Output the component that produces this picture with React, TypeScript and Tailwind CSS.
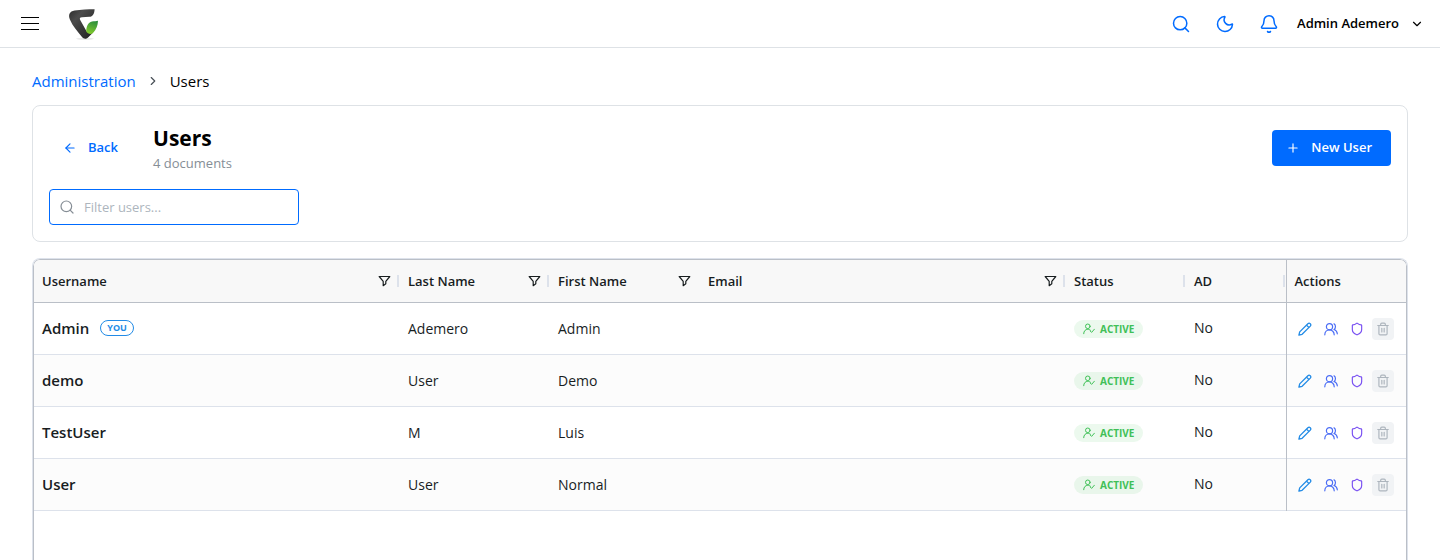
import { useState, type ReactNode } from 'react';
import { ArrowLeft, Bell, ChevronDown, ChevronRight, Moon, Plus, Search, Shield, Trash2 } from 'lucide-react';

interface User {
  username: string;
  lastName: string;
  firstName: string;
  email: string;
  ad: boolean;
  you?: boolean;
}

const users: User[] = [
  { username: 'Admin', lastName: 'Ademero', firstName: 'Admin', email: '', ad: false, you: true },
  { username: 'demo', lastName: 'User', firstName: 'Demo', email: '', ad: false },
  { username: 'TestUser', lastName: 'M', firstName: 'Luis', email: '', ad: false },
  { username: 'User', lastName: 'User', firstName: 'Normal', email: '', ad: false },
];

const columns = [
  { label: 'Username', filter: true, resize: true, width: '' },
  { label: 'Last Name', filter: true, resize: true, width: 'w-[150px]' },
  { label: 'First Name', filter: true, resize: false, width: 'w-[150px]' },
  { label: 'Email', filter: true, resize: true, width: '' },
  { label: 'Status', filter: false, resize: true, width: 'w-[120px]' },
  { label: 'AD', filter: false, resize: true, width: 'w-[100px]' },
];

function Logo() {
  return (
    <svg width="32" height="32" viewBox="0 0 32 32" aria-hidden="true">
      <defs>
        <linearGradient id="dark" x1="0" y1="0" x2="1" y2="1">
          <stop offset="0" stopColor="#2c2c2c" />
          <stop offset="0.3" stopColor="#4c4c4c" />
          <stop offset="1" stopColor="#1c1c1c" />
        </linearGradient>
        <linearGradient id="green" x1="0.6" y1="0" x2="0.3" y2="1">
          <stop offset="0" stopColor="#2c8f3c" />
          <stop offset="1" stopColor="#84cc2c" />
        </linearGradient>
      </defs>
      <ellipse cx="18" cy="30.8" rx="9" ry="0.9" fill="#e4e4e4" />
      <path
        d="M27.6 1.2C27.4 5.6 26 8.6 22.2 8.8L15 9.2C12.800 9.4 12.400 10.400 13.200 12L19.400 23L26 24.600L21.600 28.900C19.600 31.200 16.800 31.200 15 29.100C10.500 23.600 5.500 18 2.900 11.600C1 6.600 2.600 3.400 7.600 2.500C14 1.400 21 1.300 27.600 1.200Z"
        fill="url(#dark)"
      />
      <path
        d="M31 12.700C30.800 17.600 29.400 21 26 25C23.500 26.800 20.800 25.800 19.200 23.400C19.200 18.600 21 14.600 25 13.500C27.400 12.900 29.300 13.400 31 12.700Z"
        fill="url(#green)"
      />
    </svg>
  );
}

function FilterIcon() {
  return (
    <svg width="13" height="12" viewBox="0 0 13 12" fill="none" stroke="currentColor" strokeWidth="1.2">
      <path d="M1.200 1.500H11.800L7.800 6.300V8.800L5.200 10.700V6.300Z" strokeLinejoin="round" />
    </svg>
  );
}

function PencilIcon() {
  return (
    <svg width="14" height="14" viewBox="0 0 14 14" fill="none" stroke="currentColor" strokeWidth="1.3">
      <path d="M.9 13.100L1.700 9.900L9.900 1.700A1.700 1.700 0 0 1 12.300 4.100L4.100 12.300Z" strokeLinejoin="round" />
      <path d="M8.500 3.100L10.900 5.500" />
    </svg>
  );
}

function GroupIcon() {
  return (
    <svg
      width="14"
      height="14"
      viewBox="0 0 14 14"
      fill="none"
      stroke="currentColor"
      strokeWidth="1.2"
      strokeLinecap="round"
    >
      <circle cx="5.500" cy="4.700" r="3.100" />
      <path d="M.8 12.800C.8 9.900 2.900 7.900 5.500 7.900S10.200 9.900 10.200 12.800" />
      <path d="M10 1.800C11.900 3 11.900 6.100 10.200 7.500C12 8.300 13.200 9.800 13.300 11.800" />
    </svg>
  );
}

function UserCheckIcon() {
  return (
    <svg
      width="12"
      height="12"
      viewBox="0 0 12 12"
      fill="none"
      stroke="currentColor"
      strokeLinecap="round"
      strokeLinejoin="round"
    >
      <circle cx="4.800" cy="3.300" r="2.300" />
      <path d="M.7 10.700C.7 8 2.500 6.300 4.800 6.300C6 6.300 7 6.700 7.700 7.500" />
      <path d="M7.300 8.100L8.600 9.400L11.400 6.200" />
    </svg>
  );
}

interface IconButtonProps {
  label: string;
  className: string;
  disabled?: boolean;
  children: ReactNode;
}

function IconButton({ label, className, disabled, children }: IconButtonProps) {
  return (
    <button
      type="button"
      aria-label={label}
      disabled={disabled}
      className={`flex size-[22px] items-center justify-center rounded ${className}`}
    >
      {children}
    </button>
  );
}

function Header() {
  return (
    <header className="flex h-12 items-center justify-between border-b border-[#dee2e6] pr-4 pl-[21px]">
      <div className="flex items-center gap-7">
        <button type="button" aria-label="Toggle navigation" className="flex w-[18px] flex-col gap-[5px]">
          <span className="h-px w-full bg-black" />
          <span className="h-px w-full bg-black" />
          <span className="h-px w-full bg-black" />
        </button>
        <Logo />
      </div>
      <div className="flex items-center gap-[14px]">
        <div className="flex items-center gap-4 text-[#006bff]">
          <button type="button" aria-label="Search" className="flex size-7 items-center justify-center">
            <Search size={20} strokeWidth={1.8} />
          </button>
          <button type="button" aria-label="Dark mode" className="flex size-7 items-center justify-center">
            <Moon size={20} strokeWidth={1.8} />
          </button>
          <button type="button" aria-label="Notifications" className="flex size-7 items-center justify-center">
            <Bell size={20} strokeWidth={1.8} />
          </button>
        </div>
        <button type="button" className="flex items-center gap-[11px] text-[13px] font-semibold">
          Admin Ademero
          <ChevronDown size={14} />
        </button>
      </div>
    </header>
  );
}

function Row({ user }: { user: User }) {
  return (
    <tr className="h-[52px] border-b border-[#dde2eb] even:bg-[#fcfcfc]">
      <td className="px-2">
        <div className="flex items-center gap-[11px] text-[15px] leading-5 font-semibold">
          {user.username}
          {user.you && (
            <span className="flex h-4 items-center rounded-full border border-[#228be6] px-1.5 text-[9px] font-bold text-[#228be6]">
              YOU
            </span>
          )}
        </div>
      </td>
      <td className="px-2 pt-px">{user.lastName}</td>
      <td className="px-2 pt-px">{user.firstName}</td>
      <td className="px-2 pt-px">{user.email}</td>
      <td className="px-2 pt-0.5">
        <span className="flex h-[18px] w-fit items-center gap-[5px] rounded-full bg-[#40c057]/10 px-[9px] text-[10px] font-bold text-[#40c057]">
          <UserCheckIcon />
          ACTIVE
        </span>
      </td>
      <td className="px-2">{user.ad ? 'Yes' : 'No'}</td>
      <td className="border-l border-[#babfc7] px-[7px] pt-0.5">
        <div className="flex gap-1">
          <IconButton label={`Edit ${user.username}`} className="text-[#228be6]">
            <PencilIcon />
          </IconButton>
          <IconButton label={`Groups of ${user.username}`} className="text-[#4c6ef5]">
            <GroupIcon />
          </IconButton>
          <IconButton label={`Permissions of ${user.username}`} className="text-[#7950f2]">
            <Shield size={14} />
          </IconButton>
          <IconButton label={`Delete ${user.username}`} disabled className="bg-[#f1f3f5] text-[#adb5bd]">
            <Trash2 size={14} />
          </IconButton>
        </div>
      </td>
    </tr>
  );
}

export default function App() {
  const [filter, setFilter] = useState('');
  const rows = users.filter((u) =>
    `${u.username} ${u.lastName} ${u.firstName}`.toLowerCase().includes(filter.toLowerCase()),
  );

  return (
    <div className="flex h-screen flex-col overflow-hidden bg-white font-['Segoe_UI','Open_Sans',sans-serif] text-black">
      <Header />
      <main className="flex min-h-0 flex-1 flex-col px-8 pt-[21px]">
        <nav aria-label="Breadcrumb" className="flex h-6 items-center gap-[10px] text-[15px]">
          <a href="#administration" className="text-[#006bff]">
            Administration
          </a>
          <ChevronRight size={14} className="text-[#495057]" />
          <span>Users</span>
        </nav>

        <section className="mt-3 rounded-lg border border-[#dee2e6] p-4">
          <div className="flex items-center justify-between">
            <div className="flex items-center gap-4">
              <button
                type="button"
                className="flex h-9 items-center gap-[11px] px-[14px] text-[13px] font-semibold text-[#006bff]"
              >
                <ArrowLeft size={14} />
                Back
              </button>
              <div className="pb-0.5 pl-[5px]">
                <h1 className="text-[21px] leading-8 font-bold">Users</h1>
                <p className="text-[13px] leading-[18px] text-[#868e96]">4 documents</p>
              </div>
            </div>
            <button
              type="button"
              className="flex h-9 items-center gap-[11px] rounded bg-[#006bff] pr-[19px] pl-[14px] text-[13px] font-semibold text-white"
            >
              <Plus size={14} />
              New User
            </button>
          </div>
          <label className="mt-[15px] flex h-9 w-[250px] items-center gap-[9px] rounded border border-[#006bff] px-[9px]">
            <Search size={16} strokeWidth={1.8} className="text-[#868e96]" />
            <input
              type="text"
              aria-label="Filter users"
              placeholder="Filter users..."
              value={filter}
              onChange={(e) => setFilter(e.target.value)}
              className="min-w-0 flex-1 pt-0.5 text-[13px] outline-none placeholder:text-[#adb5bd]"
            />
          </label>
        </section>

        <div className="mt-4 flex min-h-0 flex-1 flex-col overflow-hidden rounded-t-lg border border-b-0 border-[#dde2eb]">
          <div className="flex-1 overflow-hidden rounded-t-[7px] border border-b-0 border-[#babfc7]">
            <table className="w-full table-fixed border-collapse text-left text-sm text-[#181d1f]">
              <thead>
                <tr className="h-[42px] border-b border-[#babfc7] bg-[#f8f8f8] text-[13px]">
                  {columns.map((col) => (
                    <th key={col.label} className={`pr-px pl-2 font-semibold ${col.width}`}>
                      <div className="flex items-center justify-between">
                        <span className="pt-0.5">{col.label}</span>
                        <span className="flex items-center gap-1.5">
                          {col.filter && <FilterIcon />}
                          <span className={`h-3 w-0.5 ${col.resize ? 'bg-[#dde2eb]' : ''}`} />
                        </span>
                      </div>
                    </th>
                  ))}
                  <th className="w-[120px] border-l border-[#babfc7] px-2 pt-0.5 font-semibold">Actions</th>
                </tr>
              </thead>
              <tbody>
                {rows.map((user) => (
                  <Row key={user.username} user={user} />
                ))}
              </tbody>
            </table>
          </div>
        </div>
      </main>
    </div>
  );
}
